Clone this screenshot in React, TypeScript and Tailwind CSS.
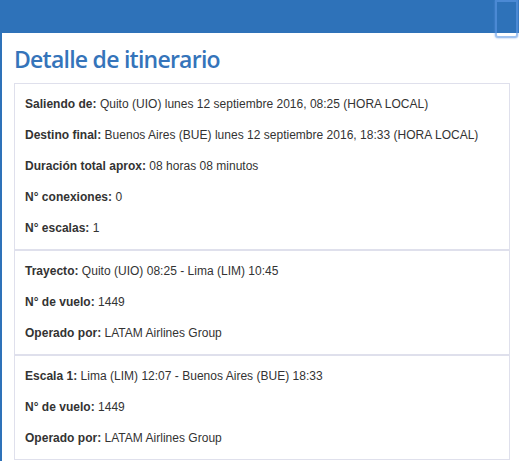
const panels: [string, string][][] = [
  [
    ["Saliendo de:", "Quito (UIO) lunes 12 septiembre 2016, 08:25 (HORA LOCAL)"],
    ["Destino final:", "Buenos Aires (BUE) lunes 12 septiembre 2016, 18:33 (HORA LOCAL)"],
    ["Duración total aprox:", "08 horas 08 minutos"],
    ["N° conexiones:", "0"],
    ["N° escalas:", "1"],
  ],
  [
    ["Trayecto:", "Quito (UIO) 08:25 - Lima (LIM) 10:45"],
    ["N° de vuelo:", "1449"],
    ["Operado por:", "LATAM Airlines Group"],
  ],
  [
    ["Escala 1:", "Lima (LIM) 12:07 - Buenos Aires (BUE) 18:33"],
    ["N° de vuelo:", "1449"],
    ["Operado por:", "LATAM Airlines Group"],
  ],
];

export default function App() {
  return (
    <div className="relative h-[461px] w-[519px] overflow-hidden bg-white font-['Liberation_Sans',Arial,sans-serif] text-[12px] tracking-[0.015px] text-[#333]">
      <div className="h-[33px] bg-[#2e72b9]" />
      <div className="h-[428px] border-l-2 border-[#2e72b9] pl-3 pr-[9px] pt-[13px]">
        <h1 className="mb-[11px] h-[26px] font-['Open_Sans',sans-serif] text-[23px] leading-[26px] font-semibold tracking-[-0.75px] text-[#3574ba]">
          Detalle de itinerario
        </h1>
        <div className="flex flex-col border border-[#dfe0ec]">
          {panels.map((rows, i) => (
            <div
              key={i}
              className={
                i === 0
                  ? "flex h-[165px] flex-col gap-[14px] px-[10px] pt-3"
                  : "flex h-[105px] flex-col gap-[14px] border-t-2 border-[#dfe0ec] px-[10px] pt-3"
              }
            >
              {rows.map(([label, value], j) => (
                <p key={j} className="h-[17px] leading-[17px] whitespace-nowrap">
                  <b>{label}</b> {value}
                </p>
              ))}
            </div>
          ))}
        </div>
      </div>
      <div className="absolute right-[1px] top-0 h-[38px] w-[23px] rounded-b-[3px] border-2 border-[#5f9ae6]/60 shadow-[0_0_2px_rgba(95,154,230,0.8)]" />
    </div>
  );
}
